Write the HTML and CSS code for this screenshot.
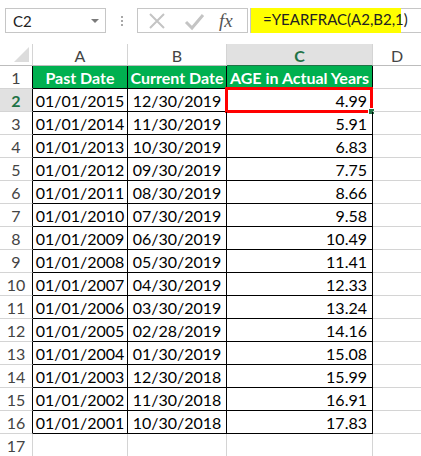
FILE: index.html
```html
<!DOCTYPE html>
<html>
<head>
<meta charset="utf-8">
<link rel="stylesheet" href="styles.css">
</head>
<body>
<div class="fbar">
  <div class="namebox"><span>C2</span><span class="drop"></span></div>
  <div class="dots"><i></i><i></i><i></i></div>
  <div class="btns">
    <svg class="ic" width="20" height="20" viewBox="0 0 20 20"><path d="M3 3 L17 17 M17 3 L3 17" stroke="#c4c4c4" stroke-width="2" fill="none"/></svg>
    <svg class="ic" width="22" height="20" viewBox="0 0 22 20"><path d="M3 11 L9 17 L20 4" stroke="#c4c4c4" stroke-width="3" fill="none"/></svg>
    <span class="fx">fx</span>
  </div>
  <div class="finput"><span class="hl">=YEARFRAC(A2,B2,1)</span></div>
</div>
<div class="sheet" id="sheet">
  <div class="ch corner"><span class="tri"></span></div>
  <div class="ch">A</div>
  <div class="ch">B</div>
  <div class="ch sel">C</div>
  <div class="ch last">D</div>

  <div class="rh">1</div>
  <div class="c t th">Past Date</div>
  <div class="c t th">Current Date</div>
  <div class="c t th">AGE in Actual Years</div>
  <div class="c e"></div>
</div>
<script src="app.js"></script>
</body>
</html>
```
FILE: app.js
```js
var rows = [
 ["01/01/2015","12/30/2019","4.99"],
 ["01/01/2014","11/30/2019","5.91"],
 ["01/01/2013","10/30/2019","6.83"],
 ["01/01/2012","09/30/2019","7.75"],
 ["01/01/2011","08/30/2019","8.66"],
 ["01/01/2010","07/30/2019","9.58"],
 ["01/01/2009","06/30/2019","10.49"],
 ["01/01/2008","05/30/2019","11.41"],
 ["01/01/2007","04/30/2019","12.33"],
 ["01/01/2006","03/30/2019","13.24"],
 ["01/01/2005","02/28/2019","14.16"],
 ["01/01/2004","01/30/2019","15.08"],
 ["01/01/2003","12/30/2018","15.99"],
 ["01/01/2002","11/30/2018","16.91"],
 ["01/01/2001","10/30/2018","17.83"]
];
var s = document.getElementById("sheet");
var h = "";
rows.forEach(function(r, i){
  var n = i + 2;
  h += '<div class="rh' + (n === 2 ? ' rsel' : '') + '">' + n + '</div>';
  h += '<div class="c t dt">' + r[0] + '</div>';
  h += '<div class="c t dt">' + r[1] + '</div>';
  h += '<div class="c t num">' + r[2] + (n === 2 ? '<span class="active"><span class="handle"></span></span>' : '') + '</div>';
  h += '<div class="c e"></div>';
});
h += '<div class="rh">17</div><div class="c"></div><div class="c"></div><div class="c"></div><div class="c e"></div>';
s.insertAdjacentHTML("beforeend", h);
```
FILE: styles.css
```css
html, body { margin: 0; padding: 0; background: #fff; }
body { font-family: Lato, "Liberation Sans", sans-serif; color: #000; width: 421px; height: 456px; overflow: hidden; }

.fbar { height: 44px; display: flex; align-items: center; box-sizing: border-box; padding-bottom: 3px; }
.namebox { margin-left: 5px; width: 101px; height: 25px; box-sizing: border-box; border: 1px solid #c6c6c6; display: flex; align-items: center; justify-content: space-between; padding: 0 6px 0 7px; font-size: 15px; color: #222; }
.drop { width: 0; height: 0; border-left: 4px solid transparent; border-right: 4px solid transparent; border-top: 4px solid #7a7a7a; }
.dots { width: 31px; display: flex; flex-direction: column; align-items: center; gap: 2px; }
.dots i { width: 2px; height: 2px; background: #a8a8a8; display: block; }
.btns { width: 111px; height: 25px; box-sizing: border-box; border: 1px solid #c6c6c6; display: flex; align-items: center; padding-left: 9px; }
.btns .ic { display: block; }
.btns .ic + .ic { margin-left: 16px; }
.fx { font-family: "Liberation Serif", serif; font-style: italic; font-size: 19px; color: #555; margin-left: 14px; letter-spacing: 0px; }
.finput { margin-left: 2px; flex: 1; height: 25px; box-sizing: border-box; border: 1px solid #c6c6c6; border-right: none; display: flex; }
.hl { background: #ffff00; width: 150px; box-sizing: border-box; padding-left: 12px; font-size: 15px; line-height: 23px; color: #222; margin-top: -1px; height: 25px; }

.sheet { display: grid; grid-template-columns: 33px 95px 99px 146px 48px; grid-template-rows: 22px repeat(17, 23px); }
.ch { box-sizing: border-box; border-right: 1px solid #d4d4d4; border-bottom: 1px solid #bdbdbd; font-size: 16px; color: #444; display: flex; align-items: center; justify-content: center; padding-top: 1px; }
.ch.sel { background: #e1e1e1; color: #217346; font-weight: bold; border-bottom-color: #217346; }
.ch.last { border-right: none; }
.corner { position: relative; }
.tri { position: absolute; right: 3px; bottom: 3px; width: 0; height: 0; border-left: 15px solid transparent; border-bottom: 15px solid #dcdcdc; }

.rh { box-sizing: border-box; border-right: 1px solid #000; border-bottom: 1px solid #d4d4d4; font-size: 16px; color: #444; display: flex; align-items: center; justify-content: center; }
.rh.rsel { background: #e1e1e1; color: #217346; font-weight: bold; }
.sheet > .rh:nth-last-child(5) { border-right-color: #d4d4d4; }

.c { box-sizing: border-box; border-right: 1px solid #d4d4d4; border-bottom: 1px solid #d4d4d4; font-size: 16px; display: flex; align-items: center; white-space: nowrap; position: relative; }
.c.t { border-right-color: #000; border-bottom-color: #000; }
.c.e { border-right: none; }
.th { background: #00b050; color: #fff; font-weight: bold; justify-content: center; }
.dt { justify-content: center; }
.num { justify-content: flex-end; padding-right: 5px; }
.active { position: absolute; left: -2px; top: -2px; right: -1px; bottom: -2px; border: 3px solid #ff0000; }
.handle { position: absolute; right: -5px; bottom: -5px; width: 5px; height: 5px; background: #217346; border: 1px solid #fff; }
```
